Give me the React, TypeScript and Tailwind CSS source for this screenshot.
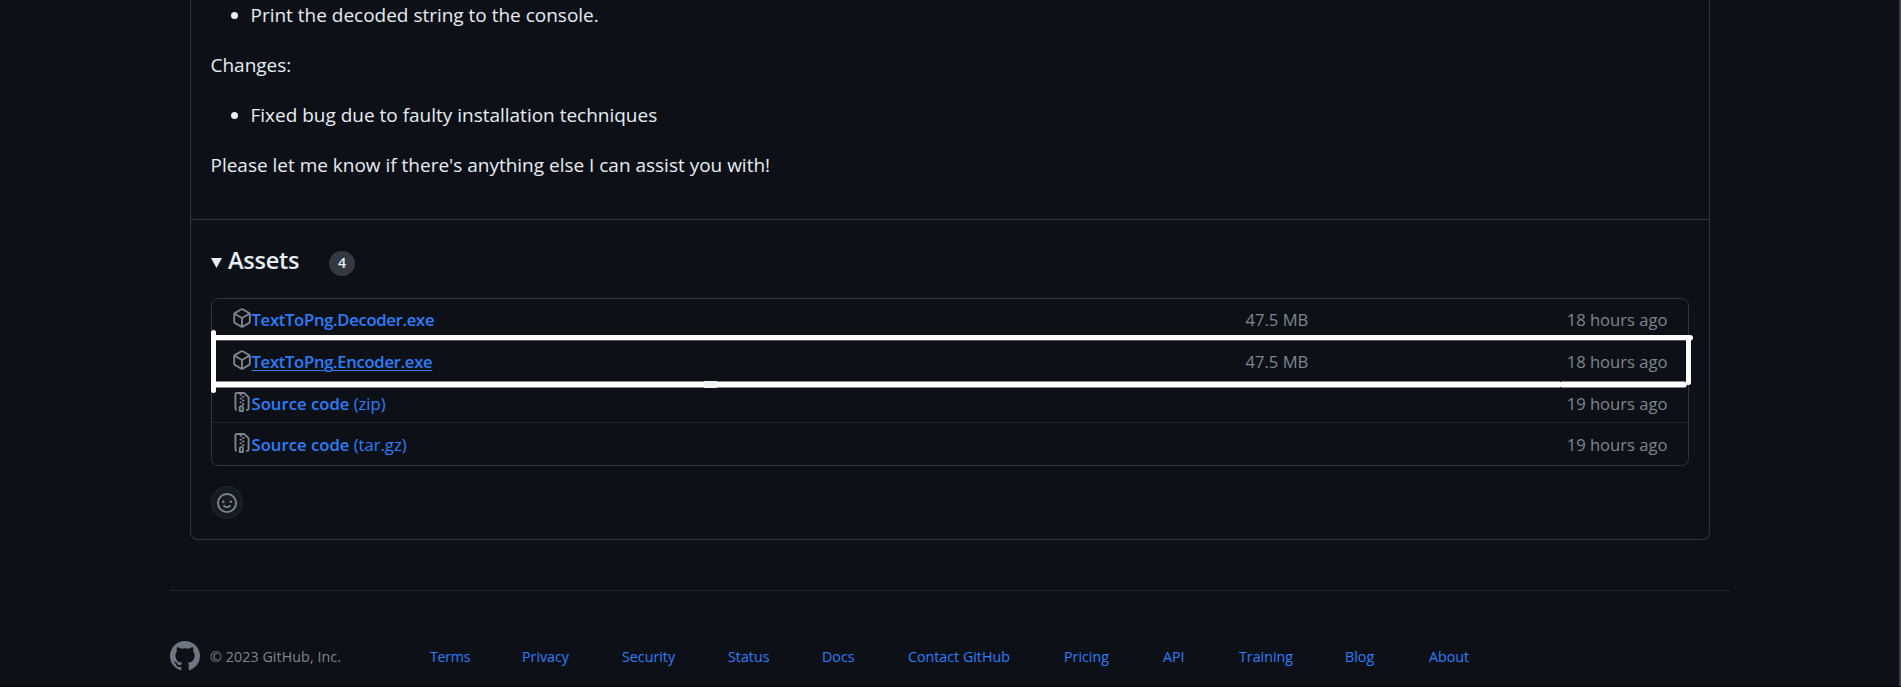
import type { ReactNode } from 'react';

const PACKAGE =
  'm8.878.392 5.25 3.045c.54.314.872.89.872 1.514v6.098a1.75 1.75 0 0 1-.872 1.514l-5.25 3.045a1.75 1.75 0 0 1-1.756 0l-5.25-3.045A1.75 1.75 0 0 1 1 11.049V4.951c0-.624.332-1.201.872-1.514L7.122.392a1.75 1.75 0 0 1 1.756 0ZM7.875 1.69l-4.63 2.685L8 7.133l4.755-2.758-4.63-2.685a.248.248 0 0 0-.25 0ZM2.5 5.677v5.372c0 .09.047.171.125.216l4.625 2.683V8.432Zm6.25 8.271 4.625-2.683a.25.25 0 0 0 .125-.216V5.677L8.75 8.432Z';
const ZIP =
  'M3.5 1.75v11.5c0 .09.048.173.126.217a.75.75 0 0 1-.752 1.298A1.748 1.748 0 0 1 2 13.25V1.75C2 .784 2.784 0 3.75 0h5.586c.464 0 .909.185 1.237.513l2.914 2.914c.329.328.513.773.513 1.237v8.586A1.75 1.75 0 0 1 12.25 15h-.5a.75.75 0 0 1 0-1.5h.5a.25.25 0 0 0 .25-.25V4.664a.25.25 0 0 0-.073-.177L9.513 1.573a.25.25 0 0 0-.177-.073H7.25a.75.75 0 0 1 0 1.5h-.5a.75.75 0 0 1 0-1.5h-3a.25.25 0 0 0-.25.25Zm3.75 8.75h.5c.966 0 1.75.784 1.75 1.75v3a.75.75 0 0 1-.75.75h-2.5a.75.75 0 0 1-.75-.75v-3c0-.966.784-1.75 1.75-1.75ZM6 5.25a.75.75 0 0 1 .75-.75h.5a.75.75 0 0 1 0 1.5h-.5A.75.75 0 0 1 6 5.25Zm.75 2.25h.5a.75.75 0 0 1 0 1.5h-.5a.75.75 0 0 1 0-1.5ZM8 6.75A.75.75 0 0 1 8.75 6h.5a.75.75 0 0 1 0 1.5h-.5A.75.75 0 0 1 8 6.75ZM8.75 3h.5a.75.75 0 0 1 0 1.5h-.5a.75.75 0 0 1 0-1.5ZM8 9.75A.75.75 0 0 1 8.75 9h.5a.75.75 0 0 1 0 1.5h-.5A.75.75 0 0 1 8 9.75Zm-1 2.5v2.25h1v-2.25a.25.25 0 0 0-.25-.25h-.5a.25.25 0 0 0-.25.25Z';
const SMILEY =
  'M8 0a8 8 0 1 1 0 16A8 8 0 0 1 8 0ZM1.5 8a6.5 6.5 0 1 0 13 0 6.5 6.5 0 0 0-13 0Zm3.82 1.636a.75.75 0 0 1 1.038.175l.007.009c.103.118.22.222.35.31.264.178.683.37 1.285.37.602 0 1.02-.192 1.285-.371.13-.088.247-.192.35-.31l.007-.008a.75.75 0 0 1 1.222.87l-.014.019a2.066 2.066 0 0 1-.184.213c-.16.166-.338.316-.53.445-.63.418-1.37.638-2.127.629-.946 0-1.652-.308-2.126-.63a3.331 3.331 0 0 1-.715-.657l-.014-.02a.75.75 0 0 1 .178-1.05ZM12 7a1 1 0 1 1-2 0 1 1 0 0 1 2 0ZM5 8a1 1 0 1 1 0-2 1 1 0 0 1 0 2Z';
const MARK =
  'M8 0C3.58 0 0 3.58 0 8c0 3.54 2.29 6.53 5.47 7.59.4.07.55-.17.55-.38 0-.19-.01-.82-.01-1.49-2.01.37-2.53-.49-2.69-.94-.09-.23-.48-.94-.82-1.13-.28-.15-.68-.52-.01-.53.63-.01 1.08.58 1.23.82.72 1.21 1.87.87 2.33.66.07-.52.28-.87.51-1.07-1.78-.2-3.64-.89-3.64-3.95 0-.87.31-1.59.82-2.15-.08-.2-.36-1.02.08-2.12 0 0 .67-.21 2.2.82.64-.18 1.32-.27 2-.27.68 0 1.36.09 2 .27 1.53-1.04 2.2-.82 2.2-.82.44 1.1.16 1.92.08 2.12.51.56.82 1.27.82 2.15 0 3.07-1.87 3.75-3.65 3.95.29.25.54.73.54 1.48 0 1.07-.01 1.93-.01 2.2 0 .21.15.46.55.38A8.013 8.013 0 0 0 16 8c0-4.42-3.58-8-8-8z';

function Octicon({ d, className }: { d: string; className: string }) {
  return (
    <svg viewBox="0 0 16 16" fill="currentColor" className={`shrink-0 ${className}`}>
      <path fillRule="evenodd" d={d} />
    </svg>
  );
}

type Asset = {
  icon: string;
  name: ReactNode;
  size?: string;
  age: string;
  row: string;
};

const assets: Asset[] = [
  {
    icon: PACKAGE,
    name: <b className="font-semibold tracking-[-0.28px]">TextToPng.Decoder.exe</b>,
    size: '47.5 MB',
    age: '18 hours ago',
    row: 'h-[42px] pt-2 border-b',
  },
  {
    icon: PACKAGE,
    name: (
      <b className="font-semibold tracking-[-0.28px] underline decoration-1 underline-offset-2">
        TextToPng.Encoder.exe
      </b>
    ),
    size: '47.5 MB',
    age: '18 hours ago',
    row: 'h-[42px] pt-2 border-b',
  },
  {
    icon: ZIP,
    name: (
      <>
        <b className="font-semibold tracking-[0.05px]">Source code</b> (zip)
      </>
    ),
    age: '19 hours ago',
    row: 'h-10 pt-2 border-b',
  },
  {
    icon: ZIP,
    name: (
      <>
        <b className="font-semibold tracking-[0.05px]">Source code</b> (tar.gz)
      </>
    ),
    age: '19 hours ago',
    row: 'h-[42px] pt-[9px]',
  },
];

const links: [string, string][] = [
  ['Terms', 'w-[92px] tracking-[-0.3px]'],
  ['Privacy', 'w-[100px]'],
  ['Security', 'w-[106px]'],
  ['Status', 'w-[94px]'],
  ['Docs', 'w-[86px]'],
  ['Contact GitHub', 'w-[156px]'],
  ['Pricing', 'w-[99px]'],
  ['API', 'w-[76px]'],
  ['Training', 'w-[106px]'],
  ['Blog', 'w-[84px]'],
  ['About', ''],
];

export default function App() {
  return (
    <div className="flex h-[687px] w-[1901px] overflow-hidden border-b border-[#05070a] bg-[#0d1117] font-['Open_Sans','Noto_Sans',sans-serif] text-[#e6edf3]">
      <div className="w-[170px] shrink-0" />
      <div className="w-[1560px] shrink-0">
        <main className="mx-5 h-[540px] rounded-b-[7.5px] border border-t-0 border-[#30363d]">
          <section className="flex h-[219px] flex-col gap-5 pl-[19.5px] text-[19px] leading-[30px] tracking-[-0.01px]">
            <ul className="list-disc pl-10">
              <li>Print the decoded string to the console.</li>
            </ul>
            <p>Changes:</p>
            <ul className="list-disc pl-10">
              <li>Fixed bug due to faulty installation techniques</li>
            </ul>
            <p>Please let me know if there's anything else I can assist you with!</p>
          </section>
          <section className="border-t border-[#30363d] px-5 pt-[25px]">
            <h3 className="flex h-[30px] items-start">
              <svg viewBox="0 0 11 10" className="mt-[13px] h-[10px] w-[11px]" fill="currentColor">
                <path d="M0 0h11L5.5 10z" />
              </svg>
              <span className="ml-1.5 w-[101px] text-[23.5px] font-semibold leading-[30px] tracking-[-0.25px]">
                Assets
              </span>
              <span className="mt-1.5 flex h-[25px] w-[26px] items-center justify-center rounded-full bg-[#343941] text-[14.25px] font-semibold leading-none">
                4
              </span>
            </h3>
            <div className="relative mt-[23px]">
              <ul className="rounded-[7.5px] border border-[#30363d]">
                {assets.map((a, i) => (
                  <li
                    key={i}
                    className={`flex items-start border-[#21262d] pl-5 pr-[20.5px] text-[16.6px] leading-[25px] ${a.row}`}
                  >
                    <Octicon d={a.icon} className="mt-px size-5 text-[#7d8590]" />
                    <span className="-ml-[0.5px] w-[994px] whitespace-pre text-[#2c7efa]">{a.name}</span>
                    <span className="text-[#7d8590]">{a.size}</span>
                    <span className="ml-auto text-[#7d8590]">{a.age}</span>
                  </li>
                ))}
              </ul>
              {/* Hand-drawn highlight around the encoder asset */}
              <div className="absolute left-1 top-[37px] h-1.5 w-[1478px] rounded-r-full border-b border-[#54575c] bg-white" />
              <div className="absolute left-1 top-[83px] h-[7px] w-[1472px] rounded-r-full border-y border-[#85888c] bg-white" />
              <div className="absolute left-[493px] top-[83px] h-[7px] w-[13px] bg-[#f1f2f4]" />
              <div className="absolute left-[1349px] top-[83px] h-px w-px bg-[#0d1117]" />
              <div className="absolute left-[1349px] top-[89px] h-px w-px bg-[#0d1117]" />
              <div className="absolute left-0 top-8 h-[63px] w-[5px] rounded-full bg-white" />
              <div className="absolute left-[1475px] top-[38px] h-[49px] w-[5px] rounded-full bg-white" />
            </div>
            <button className="mt-5 flex h-[33px] w-8 items-center justify-center rounded-full border border-[#21262d] bg-[#161b22]">
              <Octicon d={SMILEY} className="size-5 text-[#7d8590]" />
            </button>
          </section>
        </main>
        <footer className="mt-[50px] flex items-start border-t border-[#21262d] pt-[50px] text-[14.25px] leading-[22px]">
          <Octicon d={MARK} className="size-[30px] text-[#6e7681]" />
          <span className="ml-2.5 mt-[5px] w-[220px] tracking-[0.08px] text-[#7d8590]">© 2023 GitHub, Inc.</span>
          <nav className="mt-[5px] flex text-[#2c7efa]">
            {links.map(([label, width]) => (
              <a key={label} className={`whitespace-nowrap ${width}`}>
                {label}
              </a>
            ))}
          </nav>
        </footer>
      </div>
      <div className="ml-auto w-0.5 bg-[#424242]" />
    </div>
  );
}
